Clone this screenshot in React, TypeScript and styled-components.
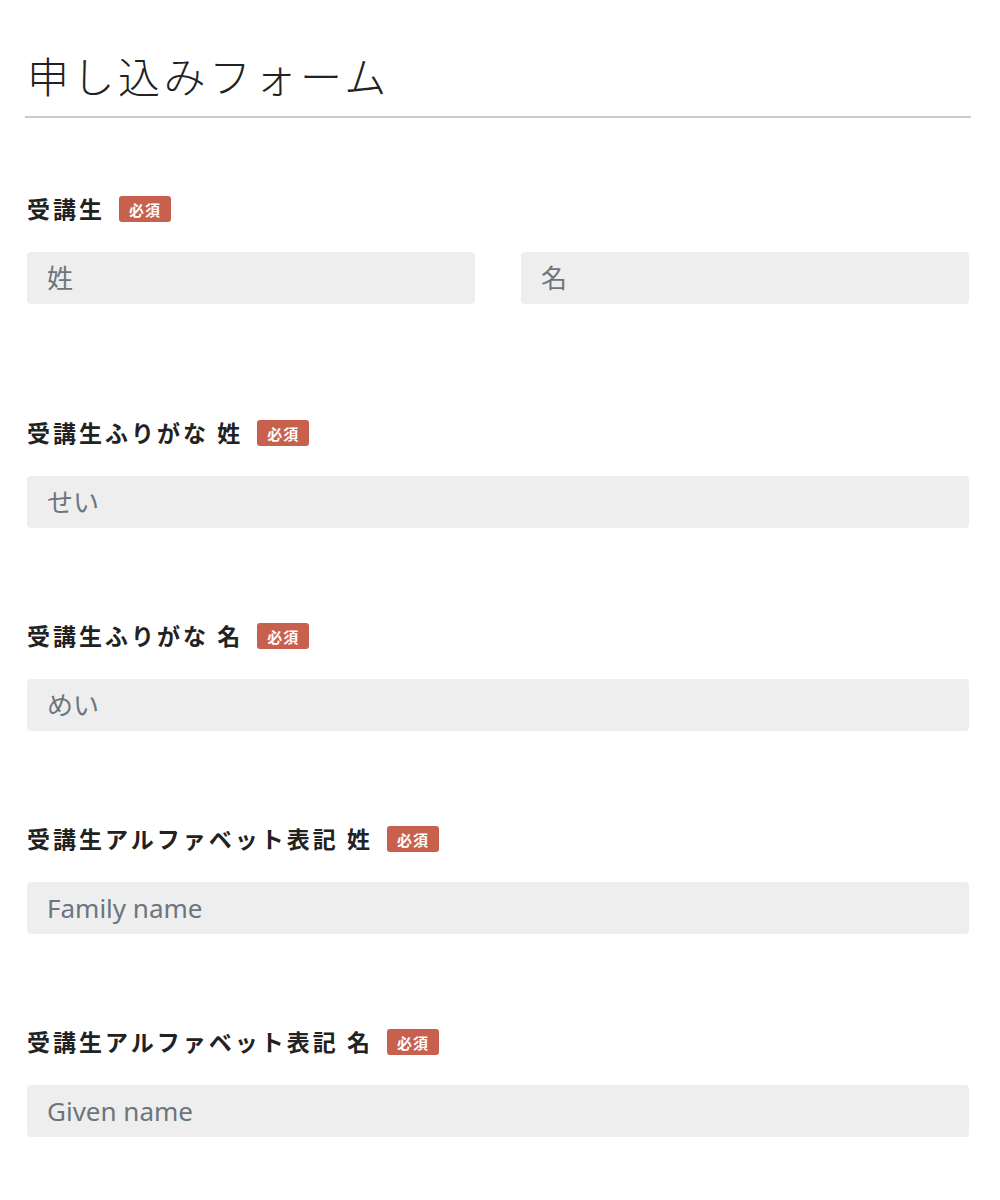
import React from 'react';
import styled, {createGlobalStyle} from 'styled-components';

const GlobalStyle = createGlobalStyle`
  html, body {
    margin: 0;
    padding: 0;
    background: #fff;
  }
  body {
    font-family: "Noto Sans CJK JP", "Noto Sans", sans-serif;
    color: #222;
  }
`;

const Page = styled.div`
  padding: 50px 29px 30px 25px;
`;

const Title = styled.h1`
  margin: 0;
  padding: 0 0 16px 2px;
  font-size: 42px;
  line-height: 50px;
  font-weight: 300;
  letter-spacing: 3.5px;
  color: #222;
  border-bottom: 2px solid #cccccc;
`;

const Form = styled.form`
  padding: 78px 2px 0 2px;
`;

const Field = styled.div<{ $extra?: boolean }>`
  margin-bottom: ${p => (p.$extra ? 116 : 95)}px;

  &:last-child {
    margin-bottom: 20px;
  }
`;

const LabelRow = styled.div`
  display: flex;
  align-items: center;
  height: 26px;
  margin-bottom: 30px;
`;

const Label = styled.label`
  font-size: 23px;
  line-height: 26px;
  font-weight: 700;
  letter-spacing: 3px;
  color: #222;
  margin-right: 14px;
  position: relative;
  top: -1px;
`;

const Required = styled.span`
  display: inline-flex;
  align-items: center;
  justify-content: center;
  width: 52px;
  height: 26px;
  border-radius: 3px;
  background: #c8604e;
  color: #fff;
  font-size: 15px;
  font-weight: 700;
  letter-spacing: 1px;
`;

const Row = styled.div<{ $cols: number }>`
  display: grid;
  grid-template-columns: repeat(${p => p.$cols}, 1fr);
  column-gap: 46px;
`;

const Input = styled.input`
  box-sizing: border-box;
  width: 100%;
  height: 52px;
  padding: 0 20px;
  border: none;
  border-radius: 4px;
  background: #eeeeee;
  font-family: "Noto Sans", "Noto Sans CJK JP", sans-serif;
  font-size: 26px;
  color: #333;
  outline: none;

  &::placeholder {
    color: #6c757d;
  }
`;

type FieldDef = {
  label: string;
  placeholders: string[];
};

const fields: FieldDef[] = [
  {label: '受講生', placeholders: ['姓', '名']},
  {label: '受講生ふりがな 姓', placeholders: ['せい']},
  {label: '受講生ふりがな 名', placeholders: ['めい']},
  {label: '受講生アルファベット表記 姓', placeholders: ['Family name']},
  {label: '受講生アルファベット表記 名', placeholders: ['Given name']},
];

export default function App() {
  return (
    <Page>
      <GlobalStyle/>
      <Title>申し込みフォーム</Title>
      <Form onSubmit={e => e.preventDefault()}>
        {fields.map((f, i) => (
          <Field key={f.label} $extra={i === 0}>
            <LabelRow>
              <Label>{f.label}</Label>
              <Required>必須</Required>
            </LabelRow>
            <Row $cols={f.placeholders.length}>
              {f.placeholders.map(p => (
                <Input key={p} type="text" placeholder={p}/>
              ))}
            </Row>
          </Field>
        ))}
      </Form>
    </Page>
  );
}
